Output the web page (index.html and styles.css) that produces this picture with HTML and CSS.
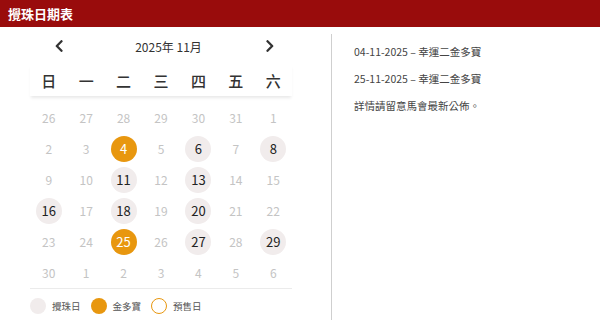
FILE: index.html
```html
<!DOCTYPE html>
<html lang="zh-Hant">
<head>
<meta charset="utf-8">
<title>攪珠日期表</title>
<link rel="stylesheet" href="styles.css">
</head>
<body>
<header class="bar">攪珠日期表</header>
<main class="main">
  <section class="cal">
    <div class="nav">
      <button class="arrow" aria-label="上月"><svg width="10" height="12" viewBox="0 0 10 12"><path d="M7.5 1.2 L2.8 6 L7.5 10.8" fill="none" stroke="#333" stroke-width="2.3" stroke-linecap="round" stroke-linejoin="round"/></svg></button>
      <div class="month">2025年 11月</div>
      <button class="arrow" aria-label="下月"><svg width="10" height="12" viewBox="0 0 10 12"><path d="M2.5 1.2 L7.2 6 L2.5 10.8" fill="none" stroke="#333" stroke-width="2.3" stroke-linecap="round" stroke-linejoin="round"/></svg></button>
    </div>
    <div class="week">
      <span>日</span><span>一</span><span>二</span><span>三</span><span>四</span><span>五</span><span>六</span>
    </div>
    <div class="days">
      <span class="d">26</span><span class="d">27</span><span class="d">28</span><span class="d">29</span><span class="d">30</span><span class="d">31</span><span class="d">1</span>
      <span class="d">2</span><span class="d">3</span><span class="d"><b class="c gold">4</b></span><span class="d">5</span><span class="d"><b class="c draw">6</b></span><span class="d">7</span><span class="d"><b class="c draw">8</b></span>
      <span class="d">9</span><span class="d">10</span><span class="d"><b class="c draw">11</b></span><span class="d">12</span><span class="d"><b class="c draw">13</b></span><span class="d">14</span><span class="d">15</span>
      <span class="d"><b class="c draw">16</b></span><span class="d">17</span><span class="d"><b class="c draw">18</b></span><span class="d">19</span><span class="d"><b class="c draw">20</b></span><span class="d">21</span><span class="d">22</span>
      <span class="d">23</span><span class="d">24</span><span class="d"><b class="c gold">25</b></span><span class="d">26</span><span class="d"><b class="c draw">27</b></span><span class="d">28</span><span class="d"><b class="c draw">29</b></span>
      <span class="d">30</span><span class="d">1</span><span class="d">2</span><span class="d">3</span><span class="d">4</span><span class="d">5</span><span class="d">6</span>
    </div>
    <div class="legend">
      <span class="dot dot-draw"></span><span class="lt">攪珠日</span>
      <span class="dot dot-gold"></span><span class="lt">金多寶</span>
      <span class="dot dot-pre"></span><span class="lt">預售日</span>
    </div>
  </section>
  <section class="info">
    <p>04-11-2025 – 幸運二金多寶</p>
    <p>25-11-2025 – 幸運二金多寶</p>
    <p>詳情請留意馬會最新公佈。</p>
  </section>
</main>
</body>
</html>
```
FILE: styles.css
```css
* { box-sizing: border-box; }
html, body { margin: 0; padding: 0; background: #fff; }
body {
  font-family: "Noto Sans CJK TC", "Noto Sans", sans-serif;
  color: #333;
  width: 600px;
  height: 325px;
  overflow: hidden;
}
.bar {
  height: 27px;
  background: #990c0c;
  color: #fff;
  font-weight: 700;
  font-size: 13px;
  line-height: 27px;
  padding-left: 8px;
}
.main {
  display: flex;
  height: 298px;
}
.cal {
  width: 331px;
  padding: 8px 39px 0 30px;
}
.nav {
  display: flex;
  align-items: center;
  height: 22px;
  padding: 0 17px 0 24px;
}
.arrow {
  border: 0;
  background: none;
  padding: 0;
  width: 10px;
  height: 12px;
  display: flex;
}
.month {
  flex: 1;
  text-align: center;
  font-size: 12px;
  padding-left: 8px;
  color: #333;
}
.week {
  margin-top: 7px;
  height: 32px;
  display: grid;
  grid-template-columns: repeat(7, 1fr);
  align-items: center;
  text-align: center;
  font-size: 15px;
  font-weight: 500;
  color: #333;
  box-shadow: 0 3px 3px -1px rgba(0,0,0,0.09);
}
.days {
  margin-top: 6px;
  display: grid;
  grid-template-columns: repeat(7, 1fr);
  grid-auto-rows: 31px;
  border-bottom: 1px solid #ebebeb;
}
.d {
  display: flex;
  align-items: center;
  justify-content: center;
  font-size: 12px;
  color: #c4c4c4;
}
.c {
  width: 26px;
  height: 26px;
  border-radius: 50%;
  display: flex;
  align-items: center;
  justify-content: center;
  font-weight: 400;
  font-size: 13px;
}
.draw { background: #f1ecec; color: #222; }
.gold { background: #e8970f; color: #fff; }
.legend {
  display: flex;
  align-items: center;
  margin-top: 9px;
  height: 16px;
}
.dot {
  width: 16px;
  height: 16px;
  border-radius: 50%;
  flex: none;
}
.dot-draw { background: #f1ecec; }
.dot-gold { background: #e8970f; }
.dot-pre { border: 1.5px solid #e8970f; background: #fff; }
.lt {
  font-size: 9.5px;
  color: #555;
  margin: 0 10px 0 6px;
}
.info {
  flex: 1;
  margin: 7px 0 5px;
  border-left: 1px solid #cfcfcf;
  padding: 9px 0 0 22px;
}
.info p {
  margin: 0 0 9px;
  font-size: 10.5px;
  line-height: 18px;
  color: #444;
}
```
